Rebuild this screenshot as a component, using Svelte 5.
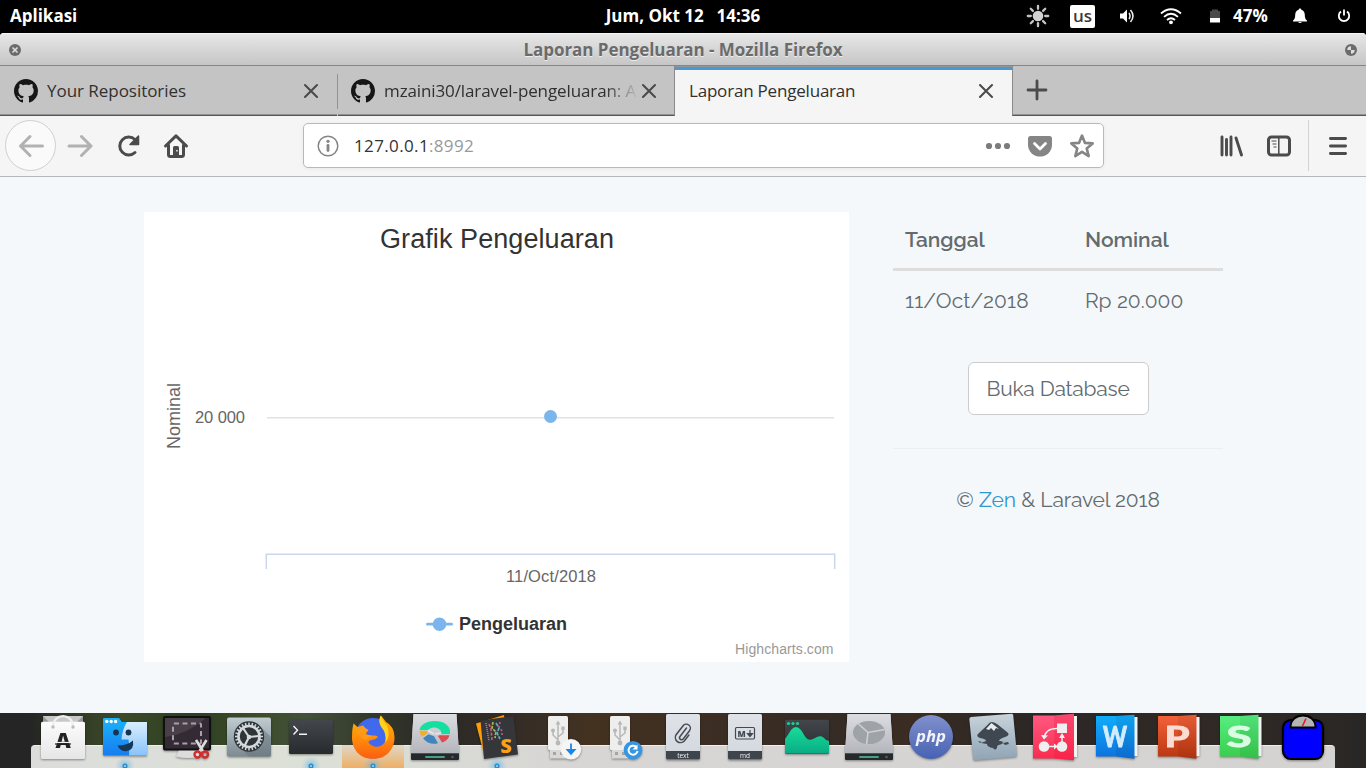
<script>
  const ghPath =
    'M8 0C3.58 0 0 3.58 0 8c0 3.54 2.29 6.53 5.47 7.59.4.07.55-.17.55-.38 0-.19-.01-.82-.01-1.49-2.01.37-2.53-.49-2.69-.94-.09-.23-.48-.94-.82-1.13-.28-.15-.68-.52-.01-.53.63-.01 1.08.58 1.23.82.72 1.21 1.87.87 2.33.66.07-.52.28-.87.51-1.07-1.78-.2-3.64-.89-3.64-3.95 0-.87.31-1.59.82-2.15-.08-.2-.36-1.02.08-2.12 0 0 .67-.21 2.2.82.64-.18 1.32-.27 2-.27s1.36.09 2 .27c1.53-1.04 2.2-.82 2.2-.82.44 1.1.16 1.92.08 2.12.51.56.82 1.27.82 2.15 0 3.07-1.87 3.75-3.65 3.95.29.25.54.73.54 1.48 0 1.07-.01 1.93-.01 2.2 0 .21.15.46.55.38A8.01 8.01 0 0 0 16 8c0-4.42-3.58-8-8-8z';
  const gearTeeth = Array.from({ length: 24 }, (_, i) => i * 15);
  const rays = Array.from({ length: 8 }, (_, i) => i * 45);
  const running = [1, 4, 5, 7];
  const wps = [
    { letter: 'W', top: '#10aefc', bottom: '#0c71dd', ink: '#d4ecfc', len: 24 },
    { letter: 'P', top: '#f5623b', bottom: '#b8360f', ink: '#fbdcd2', len: 25 },
    { letter: 'S', top: '#57ef82', bottom: '#39cc4c', ink: '#dcfbe3', len: 25 }
  ];
  const pages = [
    { kind: 'clip', label: 'text' },
    { kind: 'md', label: 'md' }
  ];
</script>

{#snippet disk(colored)}
  <path d="M9.500 1h43l2.500 40v5.500h-48V41z" fill="#c9cbd0" />
  <path d="M9.500 1h43l2.500 39H7z" fill="url(#metal)" />
  <path d="M7 40.300h48V46a1 1 0 0 1-1 1H8a1 1 0 0 1-1-1z" fill="#26292c" />
  <rect x="21" y="43" width="20" height="2" rx="1" fill="#46a184" />
  <circle cx="48.500" cy="44" r="1.300" fill="#555a5e" />
  {#if colored}
    <path d="M15.500 17C18 5 44 5 46 17.500V21h-8.500c0-7-10-8.500-13.500-4z" fill="#12e0a0" />
    <path d="M15.500 17.800h8v2.500l-5.500 3.500q-2.500-3-2.500-6z" fill="#eeb028" />
    <path d="M19 25.200l5.500-4 5.500 2 4 7c-6 1.500-11 0-15-5z" fill="#4185bd" />
    <path d="M35.500 22.300h10c-1 4-4 6-7.500 7.200l-4-6.500z" fill="#dd4a50" />
    <path d="M24 17.500l6 3.500M31 21l6-1" stroke="#e5e8ea" stroke-width="1.500" />
  {:else}
    <ellipse cx="31" cy="19.500" rx="16" ry="11.500" fill="#9ea3a8" />
    <path d="M31 19.500V31M31 19.500L22 9.500M31 19.500l16-2.500M31 19.500l-14-4" stroke="#cdd0d4" stroke-width="0" />
    <path d="M30 19.500l-10-9M30 19.500l-1.500 12M30 19.500l16.500-3" stroke="#cdd0d4" stroke-width="1.600" />
  {/if}
{/snippet}

{#snippet usb()}
  <rect x="22" y="36" width="16" height="9.500" fill="#d8d8d8" />
  <path d="M25 39h3v3h-3zM32 39h3v3h-3z" fill="#a5a5a5" />
  <rect x="20" y="3" width="20" height="34" rx="1.500" fill="#eeeeed" />
  <path d="M30 30V11M30 27l-5-5v-4M30 24l5-4v-4" stroke="#b7b7b7" stroke-width="1.500" fill="none" />
  <path d="M30 7.500l2.500 4h-5zM33.300 13.500h3.400v3.400h-3.400z" fill="#b7b7b7" />
  <circle cx="30" cy="30" r="2.400" fill="#b7b7b7" /><circle cx="25" cy="17.500" r="2" fill="#b7b7b7" />
{/snippet}

{#snippet closeX()}
  <svg class="close" width="16" height="16" viewBox="0 0 16 16"><path d="M2 2l12 12M14 2L2 14" stroke="#4b4b4b" stroke-width="2.100" stroke-linecap="round" /></svg>
{/snippet}

<svg class="defs" width="0" height="0">
  <defs>
    <linearGradient id="metal" x2="0" y2="1"><stop stop-color="#dcdde1" /><stop offset="1" stop-color="#b4b6bd" /></linearGradient>
    <linearGradient id="bag" x2="0" y2="1"><stop stop-color="#fcfcfc" /><stop offset="1" stop-color="#e6e6e6" /></linearGradient>
    <linearGradient id="blue" x2="0" y2="1"><stop stop-color="#1ab4fb" /><stop offset="1" stop-color="#167df1" /></linearGradient>
    <linearGradient id="pale" x2="0" y2="1"><stop stop-color="#d9effe" /><stop offset="1" stop-color="#88c3fb" /></linearGradient>
    <linearGradient id="steel" x2="0" y2="1"><stop stop-color="#c1ccd2" /><stop offset="1" stop-color="#7c8a92" /></linearGradient>
    <linearGradient id="dark" x2="0" y2="1"><stop stop-color="#43474b" /><stop offset="1" stop-color="#282b2e" /></linearGradient>
    <linearGradient id="fire" x2="0" y2="1"><stop stop-color="#ffb900" /><stop offset=".55" stop-color="#ff8a0c" /><stop offset="1" stop-color="#fb5d10" /></linearGradient>
    <linearGradient id="green" x2="0" y2="1"><stop stop-color="#18dc9a" /><stop offset="1" stop-color="#0aad84" /></linearGradient>
    <linearGradient id="phpg" x2="0" y2="1"><stop stop-color="#8190cb" /><stop offset="1" stop-color="#4762b4" /></linearGradient>
    <linearGradient id="ink" x2="0" y2="1"><stop stop-color="#c9d3db" /><stop offset="1" stop-color="#8fa4b5" /></linearGradient>
    <linearGradient id="pink" x2="0" y2="1"><stop stop-color="#fe5b83" /><stop offset="1" stop-color="#fb2a4d" /></linearGradient>
    <linearGradient id="sheet" x2="0" y2="1"><stop stop-color="#dfe3e8" /><stop offset="1" stop-color="#d2d7de" /></linearGradient>
    <radialGradient id="glow"><stop stop-color="#4aa9e8" stop-opacity=".65" /><stop offset="1" stop-color="#7fc4f0" stop-opacity="0" /></radialGradient>
  </defs>
</svg>

<div class="screen">
  <header class="panel">
    <span class="apps">Aplikasi</span>
    <span class="clock">Jum, Okt 12 <i></i> 14:36</span>
    <div class="tray">
      <svg width="24" height="24" viewBox="0 0 24 24">
        <circle cx="12" cy="12" r="5.300" fill="#d2d2d2" />
        {#each rays as a (a)}<path d="M12 1.800v3" transform="rotate({a} 12 12)" stroke="#c4c4c4" stroke-width="2.300" stroke-linecap="round" />{/each}
      </svg>
      <span class="kbd">us</span>
      <svg class="vol" width="18" height="18" viewBox="0 0 18 18"><path d="M2 6.500h3L9 2.500v13l-4-4H2z" fill="#fff" /><path d="M11 6q2 3 0 6M12.500 3q5 6 0 12" stroke="#eee" stroke-width="1.500" fill="none" /></svg>
      <svg class="wifi" width="24" height="18" viewBox="0 0 24 18"><path d="M2 6.500q10-8.500 20 0M5 9.800q7-6.200 14 0M8 13q4-3.600 8 0" stroke="#fff" stroke-width="1.800" fill="none" /><circle cx="12" cy="15.300" r="1.900" fill="#fff" /></svg>
      <svg class="batt" width="12" height="16" viewBox="0 0 12 16"><path d="M1 3h2V1.500h6V3h2v7H1z" fill="#4b4b4b" /><path d="M1 10h10v4.500H1z" fill="#fff" /></svg>
      <span class="pct">47%</span>
      <svg class="bell" width="18" height="18" viewBox="0 0 18 18"><path d="M9 1.500c1 0 1.300.7 1.300 1.300 2.500.7 3.500 2.700 3.500 5.200 0 3.200.8 4.500 2.200 5.500v1H2v-1C3.400 12.500 4.200 11.200 4.200 8c0-2.500 1-4.500 3.500-5.200 0-.6.300-1.300 1.300-1.300zM7 15h4q-2 2.200-4 0z" fill="#fff" /></svg>
      <svg class="power" width="16" height="16" viewBox="0 0 16 16"><path d="M5 3.600a5.200 5.200 0 1 0 6 0M8 1.500v6" stroke="#fff" stroke-width="1.800" fill="none" /></svg>
    </div>
  </header>

  <div class="titlebar">
    <svg width="12" height="12" viewBox="0 0 12 12"><circle cx="6" cy="6" r="6" fill="#6b6b6b" /><path d="M3.500 3.500l5 5m0-5l-5 5" stroke="#dedede" stroke-width="1.600" /></svg>
    <b>Laporan Pengeluaran - Mozilla Firefox</b>
    <svg width="12" height="12" viewBox="0 0 12 12"><circle cx="6" cy="6" r="6" fill="#6b6b6b" /><path d="M6 6V2.300A3.700 3.700 0 0 0 2.300 6zM6 6v3.700A3.700 3.700 0 0 0 9.700 6z" fill="#dedede" /></svg>
  </div>

  <div class="tabs">
    <div class="tab first">
      <svg width="24" height="24" viewBox="0 0 16 16"><path d={ghPath} fill="#161616" /></svg>
      <span>Your Repositories</span>{@render closeX()}
    </div>
    <i class="sep"></i>
    <div class="tab second">
      <svg width="24" height="24" viewBox="0 0 16 16"><path d={ghPath} fill="#161616" /></svg>
      <span class="fade">mzaini30/laravel-pengeluaran: A</span>{@render closeX()}
    </div>
    <div class="tab active"><span>Laporan Pengeluaran</span>{@render closeX()}</div>
    <div class="newtab"><svg width="22" height="22" viewBox="0 0 22 22"><path d="M11 2v18M2 11h18" stroke="#4b4b4b" stroke-width="2.800" stroke-linecap="round" /></svg></div>
  </div>

  <nav class="toolbar">
    <span class="back"><svg width="26" height="24" viewBox="0 0 26 24"><path d="M24.500 12H2.500M12 2.500L2.500 12l9.500 9.500" fill="none" stroke="#b1b1b1" stroke-width="3" stroke-linecap="round" stroke-linejoin="round" /></svg></span>
    <span class="btn"><svg width="26" height="24" viewBox="0 0 26 24"><path d="M2 12h22M14.500 2.500L24 12l-9.500 9.500" fill="none" stroke="#b1b1b1" stroke-width="3" stroke-linecap="round" stroke-linejoin="round" /></svg></span>
    <span class="btn"><svg width="26" height="26" viewBox="0 0 26 26"><path d="M20 6.500A9 9 0 1 0 20 19.500" fill="none" stroke="#4b4b4b" stroke-width="3" stroke-linecap="round" /><path d="M23.500 3v8.500H15z" fill="#4b4b4b" stroke="#4b4b4b" stroke-width="1.500" stroke-linejoin="round" /></svg></span>
    <span class="btn"><svg width="26" height="26" viewBox="0 0 26 26"><path d="M2.500 13L13 2.800 23.500 13M5.500 12v9.500a2 2 0 0 0 2 2h11a2 2 0 0 0 2-2V12" fill="none" stroke="#4b4b4b" stroke-width="3" stroke-linecap="round" stroke-linejoin="round" /><path d="M10 23v-8.500q0-1.500 1.500-1.500h3q1.500 0 1.500 1.500V23zm3.200-4.500h1.500v-1.500h-1.500z" fill="#4b4b4b" fill-rule="evenodd" /></svg></span>
    <div class="url">
      <svg width="22" height="22" viewBox="0 0 22 22"><circle cx="11" cy="11" r="9.800" fill="none" stroke="#858585" stroke-width="1.500" /><circle cx="11" cy="6.300" r="1.600" fill="#858585" /><path d="M11 10.300v5.200" stroke="#858585" stroke-width="2.800" stroke-linecap="round" /></svg>
      <span class="addr">127.0.0.1<em>:8992</em></span>
      <svg width="26" height="8" viewBox="0 0 26 8"><g fill="#7b7b7b"><circle cx="4" cy="4" r="3.100" /><circle cx="13" cy="4" r="3.100" /><circle cx="22" cy="4" r="3.100" /></g></svg>
      <svg class="pocket" width="24" height="22" viewBox="0 0 24 22"><path d="M2.500 1h19Q24 1 24 3.500V10a12 11.500 0 0 1-24 0V3.500Q0 1 2.500 1z" fill="#858585" /><path d="M6.500 8.500l5.500 5.500 5.500-5.500" fill="none" stroke="#fff" stroke-width="2.800" stroke-linecap="round" stroke-linejoin="round" /></svg>
      <svg class="star" width="26" height="26" viewBox="0 0 26 26"><path d="M13 2.600l3 7.300 7.700.5-6 5 2 7.700-6.700-4.200-6.700 4.200 2-7.700-6-5 7.700-.5z" fill="none" stroke="#858585" stroke-width="2.600" stroke-linejoin="round" /></svg>
    </div>
    <span class="btn lib"><svg width="26" height="24" viewBox="0 0 26 24"><path d="M4 3v18M8.500 5.500V21M13 3v18M18 4l5.500 17" stroke="#4b4b4b" stroke-width="2.900" stroke-linecap="round" /></svg></span>
    <span class="btn"><svg width="26" height="24" viewBox="0 0 26 24"><rect x="2.500" y="3" width="21" height="18" rx="3" fill="none" stroke="#4b4b4b" stroke-width="3" /><path d="M12.800 3v18" stroke="#4b4b4b" stroke-width="1.500" /><path d="M5.500 7h5M6.500 10h4M7.500 13h3" stroke="#4b4b4b" stroke-width="1.200" /></svg></span>
    <i class="vline"></i>
    <span class="menu"><svg width="20" height="22" viewBox="0 0 20 22"><path d="M2.400 3.500h15.200M2.400 11h15.200M2.400 18.500h15.200" stroke="#4b4b4b" stroke-width="2.800" stroke-linecap="round" /></svg></span>
  </nav>

  <main>
    <section class="chart">
      <svg width="705" height="450" viewBox="0 0 705 450">
        <text x="353" y="36" font-size="27" fill="#333" text-anchor="middle" textLength="234">Grafik Pengeluaran</text>
        <text transform="translate(36 204) rotate(-90)" font-size="18" fill="#666" text-anchor="middle" textLength="66">Nominal</text>
        <text x="101" y="211" font-size="16.500" fill="#666" text-anchor="end" textLength="50">20 000</text>
        <path d="M123 205.700h567" stroke="#e2e2e2" stroke-width="1.400" />
        <circle cx="406.500" cy="204.500" r="6.500" fill="#7cb5ec" />
        <path d="M122.300 357v-14.700h568.400V357" fill="none" stroke="#ccd6eb" stroke-width="1.500" />
        <text x="407" y="370" font-size="16.500" fill="#666" text-anchor="middle" textLength="90">11/Oct/2018</text>
        <path d="M283.500 412.200h24" stroke="#7cb5ec" stroke-width="2.800" stroke-linecap="round" />
        <circle cx="295.500" cy="412.200" r="6.800" fill="#7cb5ec" />
        <text x="315" y="418" font-size="18" font-weight="bold" fill="#333" textLength="108">Pengeluaran</text>
        <text x="689.500" y="442" font-size="14" fill="#999" text-anchor="end" textLength="98.500">Highcharts.com</text>
      </svg>
    </section>
    <aside>
      <table>
        <thead><tr><th>Tanggal</th><th>Nominal</th></tr></thead>
        <tbody><tr><td class="date">11/Oct/2018</td><td>Rp 20.000</td></tr></tbody>
      </table>
      <button>Buka Database</button>
      <hr />
      <p>© <a href="#zen">Zen</a> &amp; Laravel 2018</p>
    </aside>
  </main>

  <footer class="dock">
    <!-- app center -->
    <svg viewBox="0 0 62 55"><path d="M11 3h40v8H11z" fill="#c8c8c8" /><path d="M11 3l6 6h-6zM51 3l-6 6h6z" fill="#969696" /><rect x="9" y="8.700" width="44" height="37.300" rx="1.500" fill="url(#bag)" /><path d="M21 14C21-.5 41-.5 41 14" fill="none" stroke="#efefef" stroke-width="2.300" /><circle cx="21" cy="14" r="1.700" fill="#bbb" /><circle cx="41" cy="14" r="1.700" fill="#bbb" /><text x="31" y="35" text-anchor="middle" class="bold" font-size="21" fill="#222">A</text><path d="M22 29.500h18" stroke="#f4f4f4" stroke-width="1.200" /><path d="M23 31h16" stroke="#222" stroke-width="1.200" /></svg>
    <!-- files -->
    <svg viewBox="0 0 62 55"><path d="M10 5h15l3 4h24a1 1 0 0 1 1 1v31.600a1 1 0 0 1-1 1H10a1 1 0 0 1-1-1V6a1 1 0 0 1 1-1z" fill="url(#blue)" /><path d="M33 9h20v33.600H35q1-8-.5-16H27.500Q28 17 33 9z" fill="url(#pale)" /><g fill="#fff"><circle cx="12.800" cy="8.500" r="1.700" /><circle cx="17.200" cy="8.500" r="1.700" /><circle cx="21.600" cy="8.500" r="1.700" /></g><circle cx="22" cy="19.500" r="2.900" fill="#15344f" /><circle cx="34.500" cy="19.500" r="2.900" fill="#15344f" /><path d="M23.500 32.500q10 0 15.500-5 1.500 10-7 10.800-6 0-8.500-5.800z" fill="#173755" /></svg>
    <!-- screenshot -->
    <svg viewBox="0 0 62 55"><path d="M23 37h18l3 6.500q-12 3-24 0z" fill="#dcdcdc" /><rect x="8" y="4" width="46" height="32.500" rx="1" fill="#342a35" stroke="#101010" stroke-width="2" /><path d="M9 24Q30 22 50 5H9z" fill="#fff" opacity=".1" /><rect x="17" y="10.500" width="28" height="20" rx="1" fill="none" stroke="#a5a1a7" stroke-width="2" stroke-dasharray="5 3.500" /><path d="M40 27l7.500 12M50.500 27L43 39" stroke="#ddd" stroke-width="2.600" /><circle cx="41.500" cy="41.500" r="3" fill="none" stroke="#cf2e2e" stroke-width="2.400" /><circle cx="49" cy="41.500" r="3" fill="none" stroke="#cf2e2e" stroke-width="2.400" /></svg>
    <!-- settings -->
    <svg viewBox="0 0 62 55"><rect x="9" y="4.500" width="44" height="39" rx="2" fill="url(#steel)" /><path d="M43 14l10 10v19.500H31l-10-10z" fill="#5f6e76" opacity=".45" /><circle cx="31" cy="23.500" r="15.200" fill="#2f3438" />{#each gearTeeth as a (a)}<path d="M31 9.500v3" transform="rotate({a} 31 23.500)" stroke="#d3d9dc" stroke-width="1.500" />{/each}<circle cx="31" cy="23.500" r="10.500" fill="none" stroke="#d3d9dc" stroke-width="2.600" /><path d="M31 24l10-1M31 24l-6-9M31 24l-4.500 9" stroke="#d3d9dc" stroke-width="2.200" /><circle cx="31" cy="24" r="2.300" fill="#d3d9dc" /></svg>
    <!-- terminal -->
    <svg viewBox="0 0 62 55"><rect x="9" y="6.700" width="44" height="34.300" rx="1.500" fill="url(#dark)" /><path d="M13.500 13l4 4.200-4 4.200M19 21.300h8" stroke="#f4f4f4" stroke-width="1.400" fill="none" /></svg>
    <!-- firefox -->
    <svg class="focused" viewBox="0 0 62 55"><circle cx="31" cy="23" r="18" fill="#4069ee" /><path d="M11.500 10.500l4 3.500 6-1.500q1 3 5 4.500l-3 4q3 2 8 1.500 3.500-.5 4.500 1.500-2.500 3-6 3-3 0-3.500 2.500 3.500 5 10.500 4 7-2 7-9.500Q44 18 39 13q-3-6 0-10.500L44 9q8 4 8.500 15c.2 13-9 22-21.500 22S10 37 10 24.500Q10 16 11.500 10.500z" fill="url(#fire)" /><path d="M38.500 2.500Q35.500 10 40 15t3.500 15Q49 22 45 13q-4-5-6.500-10.500z" fill="#ffd21c" /><path d="M14 15l8-1 4 3-3 4 7 2-7 4q-7-4-9-12z" fill="#ff9a18" /></svg>
    <svg viewBox="0 0 62 55">{@render disk(true)}</svg>
    <!-- editor -->
    <svg viewBox="0 0 62 55"><path d="M10 10.500L38 2l5 33-24 10z" fill="#ff9b07" /><path d="M14.500 7.500L47.500 3 52 41.500 18 46z" fill="#35363a" /><g fill="none" stroke-width="1.700"><path d="M20 10l3 18" stroke="#8d8f88" stroke-dasharray="1 1" /><path d="M23 11l2 5 1 11" stroke="#d0587a" stroke-dasharray="3 1.500" /><path d="M27 9l-1 6 4 4-1 6" stroke="#a4ba54" stroke-dasharray="3 1" /><path d="M30 10l3 5-2 5 3 6" stroke="#59aec2" stroke-dasharray="4 1" /><path d="M34 9l-1 5 3 4v6" stroke="#c45679" stroke-dasharray="2 2" /></g><text x="34.500" y="39.500" class="bold" font-size="20" fill="#ff9f16">S</text></svg>
    <!-- boot stick writers -->
    <svg viewBox="0 0 62 55">{@render usb()}<circle cx="43" cy="36.200" r="10.300" fill="#f5f5f5" /><path d="M43 30.500V40M39.500 37l3.500 4 3.500-4z" stroke="#1987e6" stroke-width="1.800" fill="#1987e6" /></svg>
    <svg viewBox="0 0 62 55">{@render usb()}<circle cx="43" cy="37.200" r="9.300" fill="#3696e4" /><path d="M46 33.800a4.500 4.500 0 1 0 1.500 4.200" stroke="#fff" stroke-width="2" fill="none" /><path d="M47.500 31.500v5h-5z" fill="#fff" /></svg>
    {#each pages as p (p.label)}
      <svg viewBox="0 0 62 55"><rect x="14" y="1" width="34" height="45.500" rx="1.500" fill="url(#sheet)" /><path d="M14 38h34v7a1.500 1.500 0 0 1-1.500 1.500h-31A1.500 1.500 0 0 1 14 45z" fill="#3e454d" /><text x="31" y="44.500" font-size="6.500" text-anchor="middle" fill="#f0f0f0">{p.label}</text>
        {#if p.kind === 'clip'}
          <path d="M35 17l-6.500 8.500a2 2 0 0 0 3.200 2.500l6.300-8.300a4 4 0 0 0-6.400-5l-7 9a5.200 5.200 0 0 0 8.200 6.300l4.600-6" transform="translate(-.5 -2)" fill="none" stroke="#444b54" stroke-width="1.500" stroke-linecap="round" />
        {:else}
          <rect x="21.500" y="14.500" width="19" height="11.500" rx="1.200" fill="none" stroke="#424951" stroke-width="1.200" /><text x="23.500" y="23.500" class="bold" font-size="8.500" fill="#424951">M</text><path d="M36 17v5M33.500 20.500h5L36 23.500z" stroke="#424951" stroke-width="1.200" fill="#424951" />
        {/if}
      </svg>
    {/each}
    <!-- system monitor -->
    <svg viewBox="0 0 62 55"><rect x="9" y="6.700" width="44" height="34" rx="1.500" fill="url(#dark)" /><path d="M9 26q3-4 6-9 5-6 10 0c4 6 6 12 12 9 5-3 8-4 11-1q2 3 5 3v11.500a1 1 0 0 1-1 1H10a1 1 0 0 1-1-1z" fill="url(#green)" /><g fill="#15d294"><circle cx="12.500" cy="10.500" r="1.600" /><circle cx="17" cy="10.500" r="1.600" /><circle cx="21.500" cy="10.500" r="1.600" /></g></svg>
    <svg viewBox="0 0 62 55">{@render disk(false)}</svg>
    <!-- php -->
    <svg viewBox="0 0 62 55"><circle cx="31" cy="24" r="22" fill="url(#phpg)" /><text x="31" y="28.500" text-anchor="middle" class="php" font-size="16.500" textLength="30" lengthAdjust="spacingAndGlyphs" fill="#f1f3fb">php</text></svg>
    <!-- vector editor -->
    <svg viewBox="0 0 62 55"><path d="M9 4L49.500.7q1.500 0 1.700 1.300L55 42q0 1.500-1.500 1.700L13 47.300q-1.500 0-1.700-1.300L7.300 6Q7.300 4.300 9 4z" fill="url(#ink)" /><path d="M29.500 9q-2 0-4 3L17 20q-4 3 1 5 6 1 6 3l-5 2 6 1q0 3 6 4 2 3 4 0-1-3 5-4 3-3-3-3 0-2 6-4 6-2 2-5l-10-8q-3-2-5.500-2z" fill="#3f4850" /><path d="M29.500 10l-5.500 6 3 1 2-2 3 3 2-3 3 1z" fill="#e6ebef" /><path d="M41 30l5-1 1 2-4 1zM16 28l4 1-2 1z" fill="#3f4850" /></svg>
    <!-- diagram editor -->
    <svg viewBox="0 0 62 55"><path d="M48 3h5v41h-5z" fill="#f3f3f3" /><path d="M9 2.500h21L50 .7V47.300L30 45.500H9z" fill="url(#pink)" /><path d="M30 2.500L50 .7V47.300L30 45.500z" fill="#f0153c" opacity=".28" /><g fill="#efefef"><rect x="33" y="10.500" width="10" height="9.500" /><circle cx="20" cy="33.500" r="5.300" /><circle cx="38" cy="33.500" r="5.300" /><path d="M38 20l3 5h-6zM30 30.500l4 3-4 3zM17 22l7 .5-4 4z" /></g><path d="M38 23v8M25 33.500h7M33 15.500q-12 0-13 10" stroke="#efefef" stroke-width="1.500" fill="none" /></svg>
    {#each wps as w (w.letter)}
      <svg viewBox="0 0 62 55">
        <defs><linearGradient id="wps{w.letter}" x2="0" y2="1"><stop stop-color={w.top} /><stop offset="1" stop-color={w.bottom} /></linearGradient></defs>
        <path d="M47 4h4.500v39H47z" fill="#f1f4f5" /><path d="M10 3h20l18.500-1.300v44L30 43.500H10z" fill="url(#wps{w.letter})" /><path d="M30 3l18.500-1.300v44L30 43.500z" fill="#000" opacity=".06" />
        <text x="29" y="34" text-anchor="middle" class="wpsletter" font-size="28" textLength={w.len} lengthAdjust="spacingAndGlyphs" fill={w.ink} stroke={w.ink}>{w.letter}</text>
      </svg>
    {/each}
    <!-- scale -->
    <svg viewBox="0 0 62 55"><rect x="11" y="7" width="40" height="39" rx="8" fill="#0000fe" stroke="#000" stroke-width="2.200" /><path d="M18.500 14.500C18-1.500 44-1.500 43.500 14.500z" fill="#b5b5b5" stroke="#000" stroke-width="2" /><path d="M30.500 13L34 5.500" stroke="#f01818" stroke-width="1.600" /></svg>
    <div class="lights">
      {#each Array(21) as _, i (i)}
        <svg viewBox="0 0 62 20">{#if running.includes(i)}<circle cx="31" cy="18" r="10" fill="url(#glow)" /><circle cx="31" cy="18" r="1.900" fill="#83c7ef" stroke="#2486c9" stroke-width="1.200" />{/if}</svg>
      {/each}
    </div>
  </footer>
</div>

<style>
  :global(body) { margin: 0; overflow: hidden; }
  .screen { width: 1366px; height: 768px; background: #f5f8fb; font-family: "Open Sans", "Noto Sans", sans-serif; display: flex; flex-direction: column; overflow: hidden; box-sizing: border-box; }
  .screen * { box-sizing: border-box; }
  .defs { position: absolute; }
  svg { display: block; flex: none; }
  .panel { height: 33px; background: #000; color: #fff; font-weight: 700; font-size: 17px; line-height: 32px; display: grid; grid-template-columns: 1fr auto 1fr; flex: none; }
  .apps { padding-left: 10px; }
  .clock { white-space: nowrap; }
  .clock i { display: inline-block; width: 4px; }
  .tray { display: flex; justify-content: flex-end; align-items: center; padding-right: 14px; height: 32px; }
  .kbd { width: 25px; height: 23px; margin-left: 20px; background: #fff; color: #3a3a3a; border-radius: 2px; font-size: 17px; line-height: 22px; text-align: center; font-weight: 600; }
  .vol { margin-left: 23px; }
  .wifi { margin-left: 23px; }
  .batt { margin-left: 26px; }
  .pct { margin-left: 12px; width: 36px; }
  .bell { margin-left: 22px; }
  .power { margin-left: 27px; }
  .titlebar { height: 33px; flex: none; background: linear-gradient(#e6e6e6, #c6c6c6); border-top: 1px solid #f6f6f6; border-bottom: 1px solid #868686; border-radius: 4px 4px 0 0; box-shadow: 0 -4px 0 #000; display: flex; justify-content: space-between; align-items: center; padding: 0 9px; color: #6b6b6b; font-size: 17px; letter-spacing: -0.04px; text-shadow: 0 1px #eee; }
  .tabs { height: 50px; flex: none; display: flex; background: #c4c4c4; color: #303030; font-size: 17px; }
  .tab { display: flex; align-items: center; border-bottom: 1px solid #58585a; box-shadow: inset 0 -1px #929292; }
  .tab span { flex: 1; margin-left: 9px; white-space: nowrap; letter-spacing: -0.04px; }
  .close { margin-right: 18px; }
  .first { width: 337px; padding-left: 14px; }
  .sep { width: 1px; margin: 8px 0 7px; background: #929292; box-shadow: 0 7px #c4c4c4; }
  .second { width: 337px; padding-left: 13px; border-right: 1px solid #8a8a8a; }
  .second .close { margin-right: 17px; }
  .tab .fade { letter-spacing: -0.11px; mask-image: linear-gradient(to right, #000 86%, transparent 99%); }
  .active { width: 337px; background: #f5f5f5; border: 0; box-shadow: inset 0 1px #969696, inset 0 4px #459bd9; padding: 0 0 1px 5px; }
  .tab.active span { letter-spacing: -0.2px; }
  .newtab { flex: 1; border-left: 1px solid #8a8a8a; border-bottom: 1px solid #58585a; box-shadow: inset 0 -1px #929292; padding: 13px 0 0 13px; }
  .toolbar { height: 61px; flex: none; display: flex; align-items: center; background: #f5f5f5; border-bottom: 1px solid #b5b8ba; padding-bottom: 1px; }
  .back { width: 51px; height: 51px; margin-left: 5px; border: 1px solid #d0d0d0; border-radius: 50%; background: #fafafa; display: grid; place-items: center; }
  .btn { width: 48px; display: grid; place-items: center; }
  .url { width: 801px; height: 45px; margin-left: 103px; background: #fff; border: 1px solid #b9b9b9; border-radius: 5px; box-shadow: 0 1px 4px #0000000d; display: flex; align-items: center; padding: 0 8px 0 13px; font-size: 17px; color: #333; }
  .addr { flex: 1; margin-left: 15px; letter-spacing: 0.36px; }
  .addr em { font-style: normal; color: #999; }
  .pocket { margin-left: 17px; }
  .star { margin-left: 17px; }
  .lib { margin-left: 103px; }
  .vline { width: 1px; height: 51px; background: #d2d2d2; margin-left: 5px; }
  .menu { margin-left: 19px; }
  main { flex: 1; min-height: 0; display: flex; align-items: flex-start; padding: 35px 0 0 144px; gap: 44px; font-family: Raleway, Lato, sans-serif; color: #636b6f; }
  .chart { width: 705px; height: 450px; background: #fff; font-family: "Liberation Sans", Arial, sans-serif; }
  aside { width: 330px; font-size: 21px; display: flex; flex-direction: column; align-items: center; }
  table { width: 330px; border-collapse: separate; border-spacing: 0; table-layout: fixed; }
  th, td { text-align: left; padding: 12px; line-height: 32px; white-space: nowrap; }
  th:first-child, td:first-child { width: 180px; }
  th { border-bottom: 3px solid #ddd; font-weight: 600; }
  td { padding-top: 14px; }
  .date { letter-spacing: 0.18px; }
  button { margin-top: 33px; width: 181px; height: 53px; background: #fff; border: 1px solid #ccc; border-radius: 6px; color: #636b6f; font: 21px/1 Raleway, Lato, sans-serif; letter-spacing: -0.22px; padding: 0; white-space: nowrap; }
  hr { width: 330px; border: 0; border-top: 1px solid #eee; margin: 33px 0 0; }
  p { margin: 35px 0 0; line-height: 32px; letter-spacing: -0.12px; }
  a { color: #3097d1; text-decoration: none; }
  .dock { height: 55px; flex: none; position: relative; display: flex; padding-left: 32px; font-family: "Open Sans", sans-serif; background: linear-gradient(90deg, #252525 0 30px, #2a3022 50px, #3c4a29 120px, #2e3f22 190px, #3d4c2a 260px, #42513a 305px, #34382b 370px, #2b2925 440px, #382e25 540px, #443220 590px, #3b2d23 720px, #342b25 860px, #3b2d22 910px, #2c2725 1000px, #302925 1230px, #292725 1366px); isolation: isolate; }
  .dock::before { content: ""; position: absolute; z-index: -1; left: 31px; top: 32px; width: 1304px; height: 23px; background: linear-gradient(90deg, #dcdddb, #dce1d7 20%, #d7d6d4 40%, #d5d3d1); border-radius: 4px 4px 0 0; border-top: 1px solid #efefef; }
  .dock > svg { width: 62px; height: 55px; filter: drop-shadow(0 1px 1px #0006); }
  .dock > .focused { background: linear-gradient(#e0d7c8, #eeaf65) 0 32px / 62px 23px no-repeat; filter: none; }
  .lights { position: absolute; left: 32px; bottom: 0; display: flex; }
  .lights svg { width: 62px; height: 20px; }
  .bold { font-weight: 800; }
  .php { font-weight: 700; font-style: italic; }
  .wpsletter { font-family: Lato, sans-serif; font-weight: 700; stroke-width: 1; stroke-linejoin: round; }
</style>
